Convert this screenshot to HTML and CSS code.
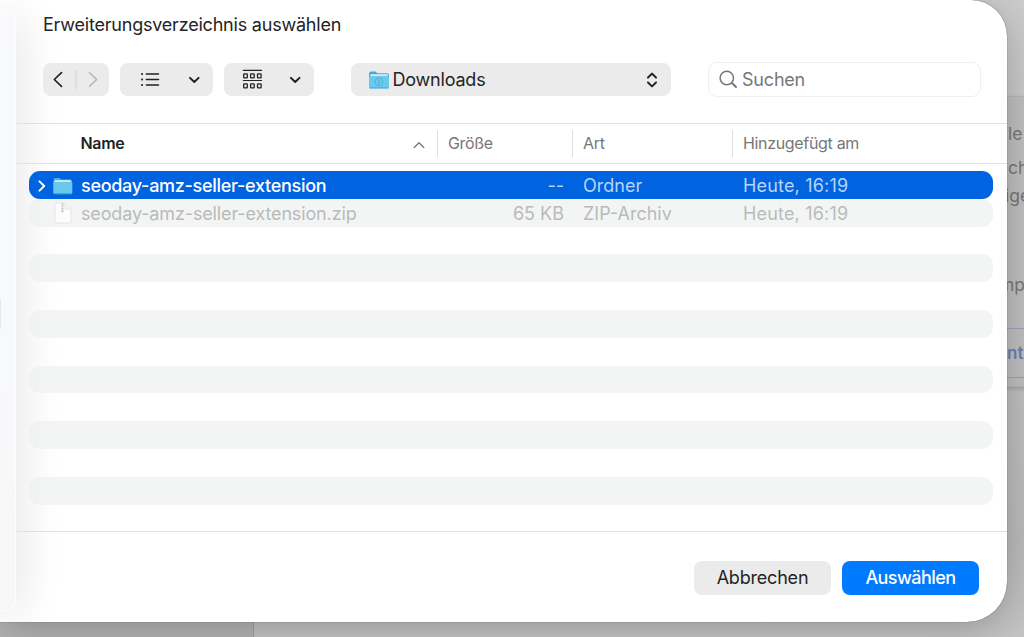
FILE: index.html
```html
<!DOCTYPE html>
<html lang="de">
<head>
  <meta charset="UTF-8">
  <meta name="viewport" content="width=device-width, initial-scale=1.0">
  <title>Erweiterungsverzeichnis auswählen</title>
  <link rel="stylesheet" href="styles.css">
</head>
<body>

  <!-- Seite hinter dem Dialog -->
  <div class="page-card">
    <p class="text-1">le</p>
    <p class="text-2">ch</p>
    <p class="text-3">ige</p>
    <p class="text-4">mp</p>
    <div class="page-button">nt</div>
  </div>
  <div class="page-bottom"></div>

  <div class="dialog">
    <div class="sidebar"><span class="sidebar-item"></span></div>

    <div class="content">
      <h1>Erweiterungsverzeichnis auswählen</h1>

      <div class="toolbar">
        <div class="control nav">
          <svg width="66" height="33" viewBox="0 0 66 33" fill="none" stroke-linecap="round" stroke-linejoin="round">
            <path d="M18.5 9.7L11.3 16.5L18.5 23.3" stroke="#222" stroke-width="1.7"/>
            <path d="M33 7.5V25.5" stroke="#d2d2d2"/>
            <path d="M46.5 9.7L53.7 16.5L46.5 23.3" stroke="#b4b4b4" stroke-width="1.5"/>
          </svg>
        </div>
        <div class="control list-view">
          <svg width="93" height="33" viewBox="0 0 93 33" fill="none" stroke="#222" stroke-linecap="round" stroke-linejoin="round">
            <path d="M26.3 10.9H38.5M26.3 16.5H38.5M26.3 22.1H38.5" stroke-width="1.5"/>
            <path d="M22 10.9H22.1M22 16.5H22.1M22 22.1H22.1" stroke-width="2"/>
            <path d="M70 14.9L74.3 19L78.6 14.9" stroke-width="2"/>
          </svg>
        </div>
        <div class="control group-view">
          <svg width="90" height="33" viewBox="0 0 90 33" fill="none" stroke="#222" stroke-linecap="round" stroke-linejoin="round">
            <path d="M19.3 7.3H37.6M19.3 17.5H37.6" stroke-width="1.2"/>
            <g stroke-width="1.3">
              <rect x="19.7" y="10.9" width="3.6" height="4" rx="0.6"/>
              <rect x="26.6" y="10.9" width="3.6" height="4" rx="0.6"/>
              <rect x="33.5" y="10.9" width="3.6" height="4" rx="0.6"/>
              <rect x="19.7" y="20.9" width="3.6" height="4" rx="0.6"/>
              <rect x="26.6" y="20.9" width="3.6" height="4" rx="0.6"/>
              <rect x="33.5" y="20.9" width="3.6" height="4" rx="0.6"/>
            </g>
            <path d="M66.9 14.9L71.2 19L75.5 14.9" stroke-width="2"/>
          </svg>
        </div>
        <div class="control location">
          <svg width="20" height="18" viewBox="0 0 20 18">
            <path d="M0 3Q0 .5 2 .5H6.5L8.5 2.3H18Q20 2.3 20 4.3V8H0Z" fill="#45a9d6"/>
            <rect x="1.2" y="3.3" width="17.6" height="5" rx="1" fill="#e6f6fc"/>
            <rect y="4.8" width="20" height="12.8" rx="1.6" fill="#6bc9ef"/>
            <path d="M.5 16.9H19.5" stroke="#45a9d6"/>
            <circle cx="10" cy="10.8" r="3.9" fill="none" stroke="#429fca" stroke-width=".6"/>
            <path d="M10 8.9V12.4M8.8 11.3L10 12.5L11.2 11.3" fill="none" stroke="#429fca" stroke-width=".6"/>
          </svg>
          <span>Downloads</span>
          <svg class="updown" width="12" height="18" viewBox="0 0 12 18" fill="none" stroke="#222" stroke-width="2" stroke-linecap="round" stroke-linejoin="round">
            <path d="M2 6.5L6 2.6L10 6.5M2 11.5L6 15.4L10 11.5"/>
          </svg>
        </div>
        <div class="search">
          <svg width="20" height="20" viewBox="0 0 20 20" fill="none" stroke="#777" stroke-linecap="round">
            <circle cx="7.8" cy="8" r="6.7" stroke-width="1.5"/>
            <path d="M12.9 13L17 17" stroke-width="2"/>
          </svg>
          <span>Suchen</span>
        </div>
      </div>

      <div class="columns">
        <div class="col-name"><span>Name</span>
          <svg width="12" height="8" viewBox="0 0 12 8" fill="none" stroke="#777" stroke-width="1.3" stroke-linecap="round" stroke-linejoin="round">
            <path d="M1.2 6.5L6 1.8L10.8 6.5"/>
          </svg>
        </div>
        <div class="col">Größe</div>
        <div class="col">Art</div>
        <div class="col">Hinzugefügt am</div>
      </div>

      <div class="files">
        <div class="row selected">
          <div class="file-name">
            <svg class="arrow" width="8" height="12" viewBox="0 0 8 12" fill="none" stroke="#fff" stroke-width="1.9" stroke-linecap="round" stroke-linejoin="round">
              <path d="M1.5 1.3L6.2 6L1.5 10.7"/>
            </svg>
            <svg class="folder" width="20" height="18" viewBox="0 0 20 18">
              <path d="M.5 3Q.5 1 2.3 1H6.5L8.3 2.5H17.5Q19 2.5 19 4.3V8H.5Z" fill="#48afd9"/>
              <rect x="1.5" y="3.3" width="16.5" height="4" rx="1" fill="#e6f6fc"/>
              <rect x=".3" y="4.7" width="19" height="12.5" rx="1.6" fill="#6ac8ec"/>
              <path d="M1 16.5H18.6" stroke="#43a4cd"/>
            </svg>
            <span>seoday-amz-seller-extension</span>
          </div>
          <div class="file-size">--</div>
          <div class="file-kind">Ordner</div>
          <div class="file-date">Heute, 16:19</div>
        </div>
        <div class="row disabled">
          <div class="file-name">
            <svg class="zip" width="18" height="22" viewBox="0 0 18 22">
              <path d="M1 2Q1 1 2 1H11L17 7V20Q17 21 16 21H2Q1 21 1 20Z" fill="#fcfcfc" stroke="#e0e1e1" stroke-width=".8"/>
              <path d="M11 1V7H17" fill="#f4f4f4" stroke="#e0e1e1" stroke-width=".8"/>
              <path d="M8.5 1.5V8" stroke="#bbb" stroke-width="1.8" stroke-dasharray="1.3 .8"/>
              <rect x="7.5" y="7.6" width="2" height="3" rx=".8" fill="#c8c8c8"/>
            </svg>
            <span>seoday-amz-seller-extension.zip</span>
          </div>
          <div class="file-size">65 KB</div>
          <div class="file-kind">ZIP-Archiv</div>
          <div class="file-date">Heute, 16:19</div>
        </div>
        <div class="row"></div>
        <div class="row stripe"></div>
        <div class="row"></div>
        <div class="row stripe"></div>
        <div class="row"></div>
        <div class="row stripe"></div>
        <div class="row"></div>
        <div class="row stripe"></div>
        <div class="row"></div>
        <div class="row stripe"></div>
      </div>

      <div class="footer">
        <button type="button" class="cancel">Abbrechen</button>
        <button type="button" class="choose">Auswählen</button>
      </div>
    </div>
  </div>

</body>
</html>
```
FILE: styles.css
```css
* {
  box-sizing: border-box;
}

body {
  margin: 0;
  height: 637px;
  overflow: hidden;
  position: relative;
  font-family: Inter, "Liberation Sans", sans-serif;
  font-size: 18px;
  color: #242424;
  background: linear-gradient(#cbcbcb, #c2c2c2 40%, #bababa 85%, #c4c4c4);
}

/* Hintergrund */
.page-card {
  position: absolute;
  left: 900px;
  top: 96px;
  width: 140px;
  height: 291px;
  border: 1px solid #b6b6b6;
  background: #bebebe;
  box-shadow: 0 2px 4px rgba(0, 0, 0, 0.15);
  color: #777;
}

.page-card p {
  position: absolute;
  margin: 0;
  font-size: 17.5px;
  line-height: 22px;
}

.page-card .text-1 { left: 107px; top: 26px; }
.page-card .text-2 { left: 107px; top: 60px; }
.page-card .text-3 { left: 104px; top: 88px; }
.page-card .text-4 { left: 98px; top: 177px; }

.page-button {
  position: absolute;
  left: 0;
  top: 231px;
  width: 140px;
  height: 50px;
  padding-left: 105px;
  border: 1px solid #98a1bb;
  line-height: 49px;
  font-weight: 600;
  font-size: 17px;
  color: #6880b0;
}

.page-bottom {
  position: absolute;
  left: 0;
  bottom: 0;
  width: 254px;
  height: 20px;
  background: #b4b4b4;
  border-right: 1px solid #a0a0a0;
}

/* Dialog */
.dialog {
  position: relative;
  display: flex;
  width: 1007px;
  height: 621.5px;
  background: #fff;
  border-radius: 0 36px 40px 0;
  box-shadow: 0 0 1px rgba(0, 0, 0, 0.7), 0 8px 36px rgba(0, 0, 0, 0.22);
  overflow: hidden;
}

.sidebar {
  flex: none;
  width: 15.5px;
  height: 601px;
  margin-top: 10px;
  padding-top: 288px;
  background: linear-gradient(#fafafb, #f7f9fd 15%, #f8f9fc 60%, #f8f8f8 85%);
  border: 1px solid #fdfdfd;
  border-left: none;
  border-radius: 0 10px 10px 0;
  box-shadow: 0 4px 44px rgba(0, 0, 0, 0.2);
}

.sidebar-item {
  display: block;
  width: 1px;
  height: 30px;
  background: #e7e9ec;
}

.content {
  flex: 1;
  display: flex;
  flex-direction: column;
}

h1 {
  margin: 0;
  padding: 13px 0 0 27.5px;
  height: 63px;
  font-size: 18px;
  font-weight: 400;
  line-height: 24px;
  letter-spacing: -0.21px;
}

.toolbar {
  display: flex;
  height: 60px;
  padding-left: 27.5px;
  align-items: flex-start;
}

.control {
  height: 33px;
  border-radius: 8px;
  background: #ebebeb;
}

.nav { width: 65.5px; }

.list-view {
  width: 93px;
  margin-left: 11px;
}

.group-view {
  width: 90px;
  margin-left: 11px;
}

.location {
  display: flex;
  align-items: center;
  width: 320px;
  margin-left: 37px;
  padding: 0 13px 0 18px;
  letter-spacing: -0.2px;
}

.location span {
  margin-left: 4px;
}

.updown {
  margin-left: auto;
}

.search {
  display: flex;
  align-items: center;
  width: 273px;
  height: 35px;
  margin: -1px 0 0 37px;
  padding-left: 10px;
  border: 1px solid #efefef;
  border-radius: 9px;
  letter-spacing: -0.2px;
  color: #777;
}

.search span {
  margin-left: 3.5px;
}

.columns {
  display: grid;
  grid-template-columns: 421.5px 135px 160px 1fr;
  align-items: center;
  height: 41px;
  border-top: 1px solid #e0e1e1;
  border-bottom: 1px solid #e0e3e2;
  font-size: 16px;
  letter-spacing: -0.33px;
  color: #777;
}

.col-name {
  display: flex;
  align-items: center;
  justify-content: space-between;
  height: 27px;
  padding: 0 12px 0 65px;
  line-height: 27px;
  font-weight: 600;
  color: #222;
}

.col-name svg {
  margin-top: 2px;
}

.col {
  height: 27px;
  padding-left: 10px;
  border-left: 1px solid #dedede;
  line-height: 27px;
}

.files {
  height: 367px;
  padding: 7px 14px 0 13.5px;
}

.row {
  display: grid;
  grid-template-columns: 408px 127px 160px 1fr;
  height: 27.8px;
  border-radius: 11px;
  line-height: 29px;
}

.stripe, .disabled {
  background: rgba(238, 241, 240, 0.7);
}

.selected {
  background: #0064e1;
  color: #b8d4f8;
}

.disabled {
  color: #b9bbba;
}

.file-name {
  display: flex;
  align-items: center;
  letter-spacing: -0.14px;
}

.selected .file-name {
  color: #fff;
  font-weight: 500;
  letter-spacing: -0.29px;
}

.arrow {
  margin-left: 9px;
}

.folder {
  margin: 0 8px 0 7px;
}

.zip {
  margin: 0 9px 0 25px;
}

.file-size {
  text-align: right;
}

.file-kind {
  padding-left: 19px;
}

.file-date {
  padding-left: 19px;
  letter-spacing: 0.18px;
}

.footer {
  flex: 1;
  display: flex;
  justify-content: flex-end;
  gap: 11px;
  padding: 29px 28px 0 0;
  border-top: 1px solid #e0e0e0;
}

button {
  width: 137px;
  height: 33.5px;
  padding: 0;
  border: none;
  border-radius: 8px;
  font-family: inherit;
  font-size: 18px;
  letter-spacing: -0.2px;
  background: #ebebeb;
  color: #242424;
}

.choose {
  background: #007aff;
  color: #fff;
  font-weight: 500;
  letter-spacing: -0.55px;
}
```
